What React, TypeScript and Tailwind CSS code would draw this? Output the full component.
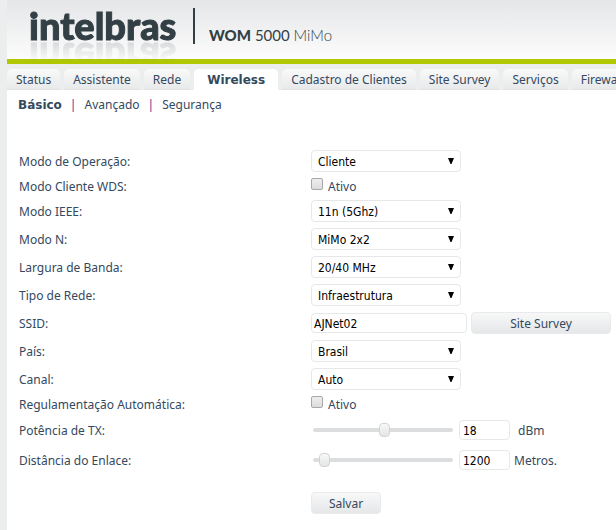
import { useState, type ReactNode } from 'react';
import clsx from 'clsx';

const tabs = [
  'Status',
  'Assistente',
  'Rede',
  'Wireless',
  'Cadastro de Clientes',
  'Site Survey',
  'Serviços',
  'Firewall',
];

const subTabs = ['Básico', 'Avançado', 'Segurança'];

function Row({ id, label, className, children }: { id: string; label: string; className?: string; children: ReactNode }) {
  return (
    <div className={clsx('flex items-center', className || 'h-7')}>
      <label htmlFor={id} className="w-[292px] shrink-0 pt-0.5">
        {label}
      </label>
      {children}
    </div>
  );
}

function SelectRow({ id, label, options }: { id: string; label: string; options: string[] }) {
  return (
    <Row id={id} label={label}>
      <div className="relative">
        <select
          id={id}
          className="block h-[22px] w-[150px] appearance-none rounded-[4px] border border-[#e6e8e8] bg-white pt-px pl-1.5 font-['DejaVu_Sans_Condensed','Noto_Sans',sans-serif] text-[12px] text-black outline-none"
        >
          {options.map((option) => (
            <option key={option}>{option}</option>
          ))}
        </select>
        <svg viewBox="0 0 6 6" className="pointer-events-none absolute top-2 right-[7px] h-1.5 w-1.5">
          <path d="M0 0h6L3.5 6h-1z" fill="#000" />
        </svg>
      </div>
    </Row>
  );
}

function CheckRow({ id, label }: { id: string; label: string }) {
  return (
    <Row id={id} label={label} className="h-[22px]">
      <input
        id={id}
        type="checkbox"
        className="mb-1 h-3 w-3 appearance-none rounded-[2px] border border-[#a8a8a8] bg-linear-to-b from-[#eeeeee] to-[#dcdcdc] checked:bg-[#444]"
      />
      <span className="ml-[5px] pt-0.5 text-[12px]">Ativo</span>
    </Row>
  );
}

function SliderRow({
  id,
  label,
  unit,
  max,
  initial,
  gap,
}: {
  id: string;
  label: string;
  unit: string;
  max: number;
  initial: number;
  gap: string;
}) {
  const [value, setValue] = useState(initial);

  return (
    <Row id={id} label={label} className="h-[30px]">
      <input
        type="range"
        aria-label={label}
        min={0}
        max={max}
        value={value}
        onChange={(e) => setValue(Number(e.target.value))}
        className="mr-1.5 ml-0.5 h-3.5 w-[140px] appearance-none bg-transparent [&::-webkit-slider-runnable-track]:h-1 [&::-webkit-slider-runnable-track]:rounded-[2px] [&::-webkit-slider-runnable-track]:bg-[#dcdddf] [&::-webkit-slider-thumb]:-mt-[5px] [&::-webkit-slider-thumb]:h-3.5 [&::-webkit-slider-thumb]:w-[11px] [&::-webkit-slider-thumb]:appearance-none [&::-webkit-slider-thumb]:rounded-[4px] [&::-webkit-slider-thumb]:border [&::-webkit-slider-thumb]:border-[#d2d3d4] [&::-webkit-slider-thumb]:bg-linear-to-b [&::-webkit-slider-thumb]:from-[#f8f8f8] [&::-webkit-slider-thumb]:to-[#e4e5e6]"
      />
      <input
        id={id}
        value={value}
        onChange={(e) => setValue(Number(e.target.value) || 0)}
        className="h-5 w-[51px] rounded-[4px] border border-[#e6e8e8] bg-white pt-px pl-[3px] font-['DejaVu_Sans_Condensed','Noto_Sans',sans-serif] text-[12px] text-black outline-none"
      />
      <span className={clsx('pt-0.5', gap)}>{unit}</span>
    </Row>
  );
}

export default function App() {
  const [activeTab, setActiveTab] = useState('Wireless');
  const [ssid, setSsid] = useState('AJNet02');

  return (
    <div className="min-h-screen overflow-hidden bg-[#ebeeed] pl-[7px] font-['Noto_Sans','Open_Sans',sans-serif] text-[12px] leading-4 text-[#34495e]">
      <header className="flex h-16 border-b-[5px] border-[#afc800] bg-linear-to-b from-[#e5e6e8] to-[#fcfcfc] pl-[22px] font-[Lato,sans-serif] whitespace-nowrap text-[#323f45]">
        <div className="h-[42px] w-[150px] pt-[5px] text-[38px] leading-10 font-black [-webkit-box-reflect:below_-1px_linear-gradient(transparent_50%,rgba(0,0,0,0.16))] [-webkit-text-stroke:1px_#323f45]">
          intelbras
        </div>
        <div className="mt-2 ml-3.5 h-9 w-0.5 bg-[#323f45]" />
        <div className="mt-[25px] ml-3.5 text-[15px] leading-5">
          <span className="font-black">WOM</span> 5000 <span className="font-light">MiMo</span>
        </div>
      </header>

      <nav className="flex gap-1 pt-[5px]">
        {tabs.map((tab) => (
          <button
            key={tab}
            onClick={() => setActiveTab(tab)}
            className={clsx(
              'h-[21px] shrink-0 rounded-t-[5px] whitespace-nowrap',
              tab === activeTab
                ? "bg-white px-[13px] font-['DejaVu_Sans',sans-serif] font-bold"
                : 'border-b border-[#dfe1e2] bg-linear-to-b from-[#f9f9f9] to-[#e8e9ea] px-[9px] pt-0.5'
            )}
          >
            {tab}
          </button>
        ))}
      </nav>

      <main className="min-h-[440px] bg-white">
        <div className="flex h-7 items-center pt-0.5 pl-[11px]">
          {subTabs.map((tab, i) => (
            <a
              key={tab}
              href="#"
              className={clsx(
                i === 0
                  ? "font-['DejaVu_Sans',sans-serif] font-bold"
                  : "before:mx-2 before:font-normal before:text-[#5a2f9a] before:content-['|']"
              )}
            >
              {tab}
            </a>
          ))}
        </div>

        <form className="mt-[29px] pl-3" onSubmit={(e) => e.preventDefault()}>
          <SelectRow id="operation" label="Modo de Operação:" options={['Cliente', 'AP']} />
          <CheckRow id="wds" label="Modo Cliente WDS:" />
          <SelectRow id="ieee" label="Modo IEEE:" options={['11n (5Ghz)', '11a (5Ghz)']} />
          <SelectRow id="mode-n" label="Modo N:" options={['MiMo 2x2', 'SiSo 1x1']} />
          <SelectRow id="bandwidth" label="Largura de Banda:" options={['20/40 MHz', '20 MHz']} />
          <SelectRow id="network" label="Tipo de Rede:" options={['Infraestrutura', 'Ad-hoc']} />
          <Row id="ssid" label="SSID:">
            <input
              id="ssid"
              value={ssid}
              onChange={(e) => setSsid(e.target.value)}
              className="h-5 w-[156px] rounded-[4px] border border-[#e6e8e8] bg-white pt-px pl-0.5 font-['DejaVu_Sans_Condensed','Noto_Sans',sans-serif] text-[12px] text-black outline-none"
            />
            <button
              type="button"
              className="ml-1 h-[22px] w-[140px] rounded-[4px] border border-[#e8eaeb] bg-linear-to-b from-[#f8f8f8] to-[#e5e7e9] pt-0.5"
            >
              Site Survey
            </button>
          </Row>
          <SelectRow id="country" label="País:" options={['Brasil']} />
          <SelectRow id="channel" label="Canal:" options={['Auto']} />
          <CheckRow id="regulation" label="Regulamentação Automática:" />
          <SliderRow id="power" label="Potência de TX:" unit="dBm" max={35} initial={18} gap="ml-2" />
          <SliderRow id="distance" label="Distância do Enlace:" unit="Metros." max={26000} initial={1200} gap="ml-1" />
          <button
            type="submit"
            className="mt-[17px] ml-[292px] h-[22px] w-[70px] rounded-[4px] border border-[#e8eaeb] bg-linear-to-b from-[#f8f8f8] to-[#e5e7e9] pt-0.5"
          >
            Salvar
          </button>
        </form>
      </main>
    </div>
  );
}
